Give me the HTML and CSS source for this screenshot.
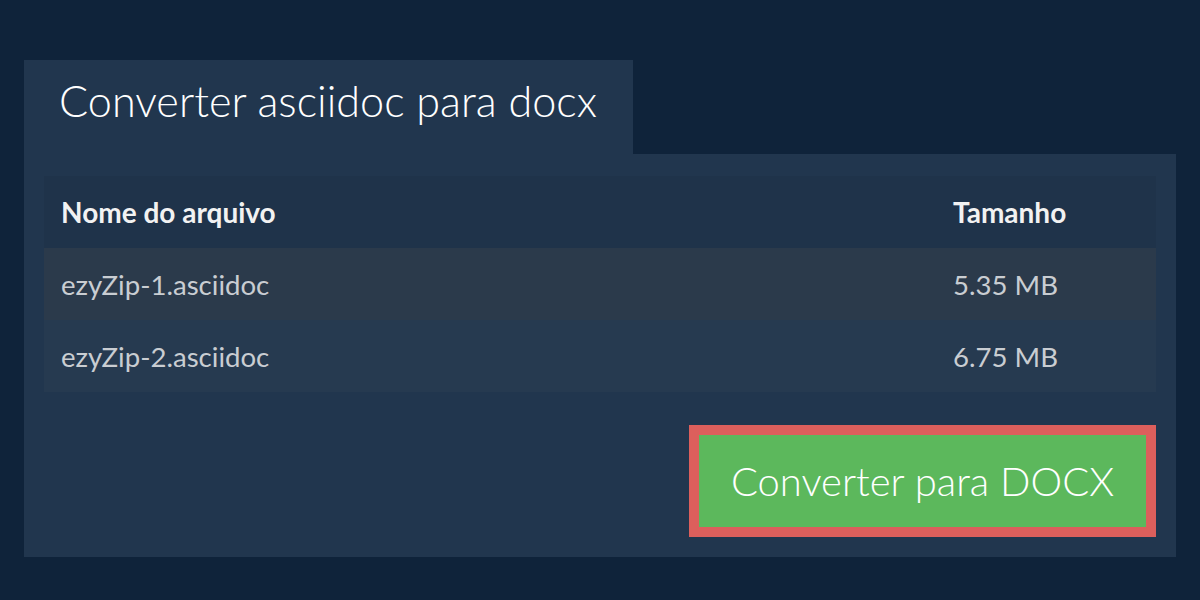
FILE: index.html
```html
<!DOCTYPE html>
<html lang="pt">
<head>
<meta charset="utf-8">
<link rel="stylesheet" href="styles.css">
</head>
<body>
<div class="page">
  <div class="tab"><h1 class="title">Converter asciidoc para docx</h1></div>
  <div class="panel">
    <table class="files">
      <thead>
        <tr><th class="col-name">Nome do arquivo</th><th class="col-size">Tamanho</th></tr>
      </thead>
      <tbody>
        <tr class="odd"><td>ezyZip-1.asciidoc</td><td>5.35 MB</td></tr>
        <tr class="even"><td>ezyZip-2.asciidoc</td><td>6.75 MB</td></tr>
      </tbody>
    </table>
    <div class="actions">
      <button class="convert">Converter para DOCX</button>
    </div>
  </div>
</div>
</body>
</html>
```
FILE: styles.css
```css
html, body {
  margin: 0;
  padding: 0;
  background: #0f233a;
  font-family: Lato, "Open Sans", sans-serif;
}
.page {
  padding: 60px 24px 0;
}
.tab {
  display: inline-block;
  background: #21364e;
  padding: 0 36px 0 35px;
  height: 94px;
}
.title {
  margin: 0;
  font-weight: 300;
  font-size: 43.2px;
  line-height: 80px;
  color: #ffffff;
}
.panel {
  background: #21364e;
  padding: 22px 20px 20px;
}
.files {
  width: 100%;
  border-collapse: collapse;
}
.files th {
  text-align: left;
  font-weight: 700;
  font-size: 28px;
  color: #f2f2f2;
  height: 72px;
  padding: 0 17px;
  background: #1f334a;
}
.files th.col-size { width: 186px; }
.files td {
  font-size: 27.6px;
  color: #c9cdd2;
  height: 72px;
  padding: 0 17px;
}
.files tr.odd td { background: #2b3a4b; }
.files tr.even td { background: #263a50; }
.actions {
  display: flex;
  justify-content: flex-end;
  margin-top: 33px;
}
.convert {
  font-family: Lato, "Open Sans", sans-serif;
  font-weight: 300;
  font-size: 40px;
  color: #ffffff;
  background: #5cb85c;
  border: 10px solid #dc5f5c;
  height: 112px;
  width: 467px;
  padding: 0;
  cursor: pointer;
}
```
